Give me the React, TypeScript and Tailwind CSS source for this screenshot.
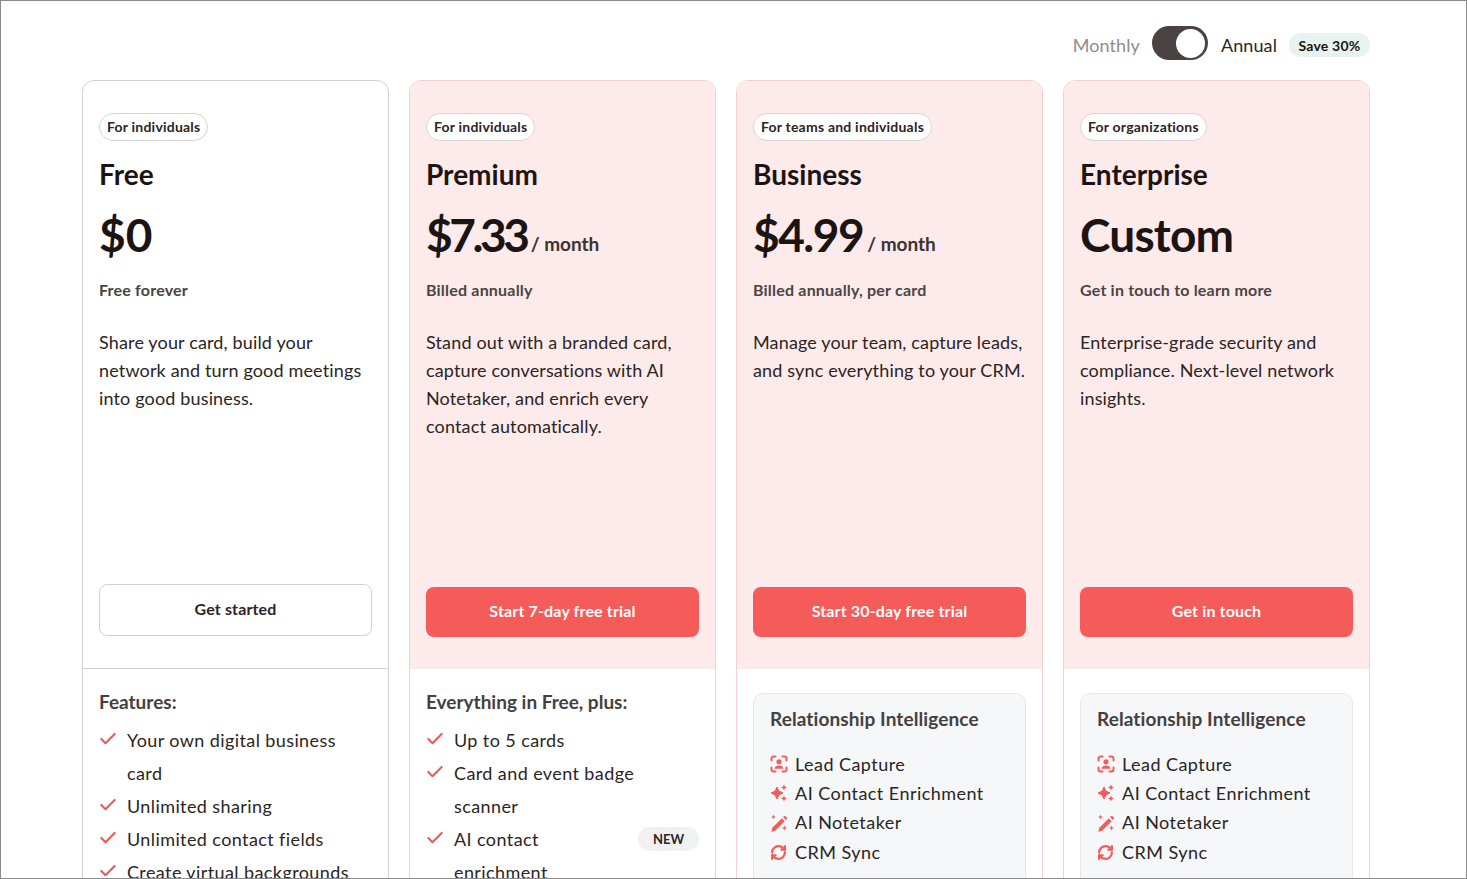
import { Check, RefreshCw } from "lucide-react";

const font = { fontFamily: "Lato, 'Noto Sans', sans-serif" };

const CaptureIcon = () => (
  <svg width="18" height="18" viewBox="0 0 18 18" fill="none" className="shrink-0">
    <path d="M1.500 5.500V3.500a2 2 0 0 1 2-2h2M12.500 1.500h2a2 2 0 0 1 2 2v2M16.500 12.500v2a2 2 0 0 1-2 2h-2M5.500 16.500h-2a2 2 0 0 1-2-2v-2" stroke="#f25c5a" strokeWidth="2" strokeLinecap="round" />
    <circle cx="9" cy="6.800" r="2.600" fill="#f25c5a" />
    <path d="M4.500 13.800c.3-2.300 2.200-3.300 4.500-3.300s4.200 1 4.500 3.300z" fill="#f25c5a" />
  </svg>
);

const SparkleIcon = () => (
  <svg width="18" height="18" viewBox="0 0 18 18" fill="#f25c5a" className="shrink-0">
    <path d="M7 3l1.900 4.100L13 9l-4.100 1.900L7 15l-1.900-4.100L1 9l4.100-1.900z" stroke="#f25c5a" strokeWidth="1" strokeLinejoin="round" />
    <path d="M14 .5l.9 2.100 2.100.9-2.100.9-.9 2.100-.9-2.100-2.100-.9 2.100-.9z" />
    <path d="M14 11.500l.9 2.100 2.100.9-2.100.9-.9 2.100-.9-2.100-2.100-.9 2.100-.9z" />
  </svg>
);

const WandIcon = () => (
  <svg width="18" height="18" viewBox="0 0 18 18" fill="#f25c5a" className="shrink-0">
    <path d="M11.800 4.300l2.900 2.900L5.200 16.700l-3.900 1 1-3.900z" />
    <path d="M13 3.100l.9-.9a1.100 1.100 0 0 1 1.600 0l1.300 1.300a1.100 1.100 0 0 1 0 1.600l-.9.9z" />
    <path d="M3.500.5l.7 1.800 1.800.7-1.800.7-.7 1.800-.7-1.800L1 3l1.800-.7z" />
    <path d="M14.500 11.500l.7 1.800 1.800.7-1.800.7-.7 1.800-.7-1.800-1.800-.7 1.800-.7z" />
  </svg>
);

const SyncIcon = () => (
  <span className="flex w-[18px] shrink-0 justify-start">
    <RefreshCw size={17} strokeWidth={3.2} color="#f25c5a" />
  </span>
);

const intelligence = [
  { icon: <CaptureIcon />, label: "Lead Capture" },
  { icon: <SparkleIcon />, label: "AI Contact Enrichment" },
  { icon: <WandIcon />, label: "AI Notetaker" },
  { icon: <SyncIcon />, label: "CRM Sync" },
];

const Feature = ({ text, isNew }: { text: string; isNew?: boolean }) => (
  <li className="flex items-start text-[18px] leading-[33px] tracking-[0.4px] text-[#2b2523]">
    <Check size={20} strokeWidth={2.6} color="#e85d5b" className="mt-[5px] mr-[8px] shrink-0 -translate-x-px" />
    <span className={isNew ? "w-[120px]" : "max-w-[232px]"}>{text}</span>
    {isNew && (
      <span className="ml-auto mt-[4px] flex h-[24px] w-[61px] items-center justify-center rounded-full bg-gradient-to-r from-[#f7eeee] to-[#edf3f3] text-[13px] font-bold leading-none tracking-normal">
        NEW
      </span>
    )}
  </li>
);

const Intelligence = () => (
  <div className="mt-[24px] h-[300px] rounded-[10px] border border-[#e8e8e8] bg-[#f5f7f9] px-[16px] pt-[12px]">
    <h4 className="text-[19px] font-bold leading-[26px] tracking-[0.1px] text-[#45403f]">Relationship Intelligence</h4>
    <ul className="mt-[17.500px] flex flex-col">
      {intelligence.map((item) => (
        <li key={item.label} className="flex h-[29.300px] items-center gap-[7px] text-[18px] tracking-[0.45px] text-[#2b2523]">
          {item.icon}
          <span>{item.label}</span>
        </li>
      ))}
    </ul>
  </div>
);

type Plan = {
  audience: string;
  name: string;
  price: string;
  priceClass: string;
  suffix?: string;
  billing: string;
  description: string[];
  cta: string;
  featuresTitle?: string;
  features?: { text: string; isNew?: boolean }[];
};

const plans: Plan[] = [
  {
    audience: "For individuals",
    name: "Free",
    price: "$0",
    priceClass: "tracking-[0px]",
    billing: "Free forever",
    description: ["Share your card, build your", "network and turn good meetings", "into good business."],
    cta: "Get started",
    featuresTitle: "Features:",
    features: [
      { text: "Your own digital business card" },
      { text: "Unlimited sharing" },
      { text: "Unlimited contact fields" },
      { text: "Create virtual backgrounds" },
    ],
  },
  {
    audience: "For individuals",
    name: "Premium",
    price: "$7.33",
    priceClass: "tracking-[-3.400px]",
    suffix: "/ month",
    billing: "Billed annually",
    description: ["Stand out with a branded card,", "capture conversations with AI", "Notetaker, and enrich every", "contact automatically."],
    cta: "Start 7-day free trial",
    featuresTitle: "Everything in Free, plus:",
    features: [
      { text: "Up to 5 cards" },
      { text: "Card and event badge scanner" },
      { text: "AI contact enrichment", isNew: true },
    ],
  },
  {
    audience: "For teams and individuals",
    name: "Business",
    price: "$4.99",
    priceClass: "tracking-[-1.500px]",
    suffix: "/ month",
    billing: "Billed annually, per card",
    description: ["Manage your team, capture leads,", "and sync everything to your CRM."],
    cta: "Start 30-day free trial",
  },
  {
    audience: "For organizations",
    name: "Enterprise",
    price: "Custom",
    priceClass: "tracking-[-0.800px]",
    billing: "Get in touch to learn more",
    description: ["Enterprise-grade security and", "compliance. Next-level network", "insights."],
    cta: "Get in touch",
  },
];

const PlanCard = ({ plan }: { plan: Plan }) => {
  const free = plan.name === "Free";
  return (
    <div className={`flex h-[900px] flex-col overflow-hidden rounded-t-[12px] border ${free ? "border-[#d2d2d2]" : "border-[#f5cfcd]"} bg-white`}>
      <div className={`flex h-[588px] shrink-0 flex-col px-[16px] pb-[32px] pt-[32px] ${free ? "border-b border-[#d2d2d2]" : "bg-[#fdeaea]"}`}>
        <span className="flex h-[28px] w-fit items-center rounded-full border border-[#d8d4d4] bg-white px-[7px] pb-[2px] text-[14px] font-bold tracking-[0.22px] text-[#2b2523]">
          {plan.audience}
        </span>
        <h3 className="mt-[14px] text-[28px] font-bold leading-[38px] text-[#1c1412]">{plan.name}</h3>
        <div className="mt-[17px] flex h-[50px] items-baseline">
          <span className={`text-[46px] font-bold leading-[50px] text-[#1c1412] ${plan.priceClass}`}>{plan.price}</span>
          {plan.suffix && <span className="ml-[4px] -translate-y-px text-[19px] font-bold text-[#3a3331]">{plan.suffix}</span>}
        </div>
        <p className="mt-[18px] text-[16px] font-bold leading-[24px] tracking-[0.2px] text-[#4a4543]">{plan.billing}</p>
        <p className="mt-[26px] text-[18px] leading-[28px] tracking-[0.15px] text-[#2b2523]">
          {plan.description.map((line) => (
            <span key={line} className="block whitespace-nowrap">{line}</span>
          ))}
        </p>
        <button
          className={`mt-auto flex w-full items-center justify-center rounded-[8px] text-[16px] font-bold tracking-[0.15px] ${
            free ? "h-[52px] border border-[#d2d2d2] bg-white pb-[3px] text-[#2b2523]" : "h-[50px] bg-[#f45b59] pb-[2px] text-white"
          }`}
        >
          {plan.cta}
        </button>
      </div>
      <div className="px-[16px]">
        {plan.features ? (
          <>
            <h4 className="mt-[20px] text-[19px] font-bold leading-[26px] text-[#45403f]">{plan.featuresTitle}</h4>
            <ul className="mt-[9px] flex flex-col">
              {plan.features.map((f) => (
                <Feature key={f.text} text={f.text} isNew={f.isNew} />
              ))}
            </ul>
          </>
        ) : (
          <Intelligence />
        )}
      </div>
    </div>
  );
};

export default function App() {
  return (
    <div style={font} className="h-[879px] overflow-hidden border border-[#8a8a8a] bg-white">
      <div className="ml-[81px] w-[1288px]">
        <div className="flex h-[79px] items-center justify-end pt-[5px]">
          <span className="mt-[4px] text-[18px] tracking-[0.1px] text-[#8d8d8d]">Monthly</span>
          <span className="ml-[12px] flex h-[34px] w-[56px] items-center justify-end rounded-full bg-[#4a4242] pr-[3px]">
            <span className="h-[29px] w-[29px] rounded-full bg-white" />
          </span>
          <span className="ml-[13px] mt-[4px] text-[18px] tracking-[0.1px] text-[#2b2523]">Annual</span>
          <span className="ml-[12px] mt-[4px] flex h-[24px] w-[81px] items-center justify-center rounded-full bg-[#e7f3ee] text-[14px] font-bold tracking-[0.2px] text-[#1c1412]">
            Save 30%
          </span>
        </div>
        <div className="grid grid-cols-4 gap-[20px]">
          {plans.map((plan) => (
            <PlanCard key={plan.name} plan={plan} />
          ))}
        </div>
      </div>
    </div>
  );
}
